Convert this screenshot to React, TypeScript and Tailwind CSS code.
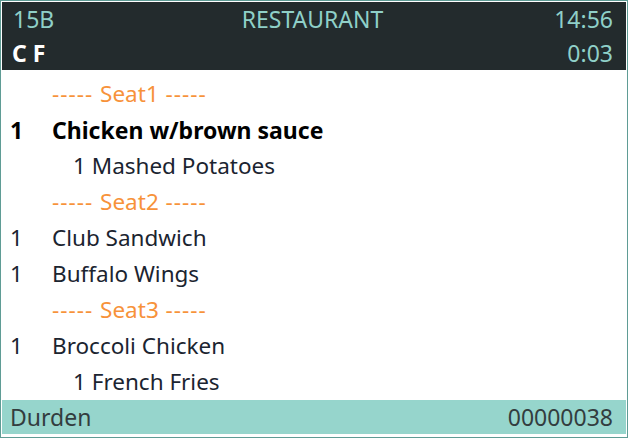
function Seat({ n }: { n: number }) {
  return (
    <div className="h-[36px] flex items-center pl-[50px] text-[#f7923a] whitespace-pre">
      <span className="tracking-[1px]">----- </span>
      <span>Seat{n}</span>
      <span className="tracking-[1px]"> -----</span>
    </div>
  );
}

function Item({ name }: { name: string }) {
  return (
    <div className="h-[36px] flex items-center">
      <span className="w-[50px] pl-[8px]">1</span>
      <span>{name}</span>
    </div>
  );
}

export default function App() {
  const font = { fontFamily: '"Noto Sans", "Open Sans", sans-serif' };
  return (
    <div className="w-[628px] h-[438px] bg-white border border-[#5f9c95] p-px flex flex-col" style={font}>
      <div className="bg-[#232b2d] h-[68px] shrink-0 flex flex-col pl-[10px] pr-[13px]">
        <div className="h-[34px] flex items-center justify-between text-[23px] text-[#8fd0c8]">
          <span className="w-[120px] pl-[1px]">15B</span>
          <span>RESTAURANT</span>
          <span className="w-[120px] text-right">14:56</span>
        </div>
        <div className="h-[34px] flex items-center justify-between text-[23px]">
          <span className="text-white font-bold">C F</span>
          <span className="text-[#8fd0c8]">0:03</span>
        </div>
      </div>
      <div className="flex-1 flex flex-col pt-[6px] text-[22.5px] text-[#1b2430]">
        <Seat n={1} />
        <div className="h-[36px] flex items-center font-bold text-black text-[23px]">
          <span className="w-[50px] pl-[8px]">1</span>
          <span>Chicken w/brown sauce</span>
        </div>
        <div className="h-[36px] flex items-center pl-[71px]">1 Mashed Potatoes</div>
        <Seat n={2} />
        <Item name="Club Sandwich" />
        <Item name="Buffalo Wings" />
        <Seat n={3} />
        <Item name="Broccoli Chicken" />
        <div className="h-[36px] flex items-center pl-[71px]">1 French Fries</div>
      </div>
      <div className="bg-[#96d5cc] h-[34px] shrink-0 mb-[2px] flex items-center justify-between pl-[8px] pr-[13px] text-[23px] text-[#333d3f]">
        <span>Durden</span>
        <span>00000038</span>
      </div>
    </div>
  );
}
